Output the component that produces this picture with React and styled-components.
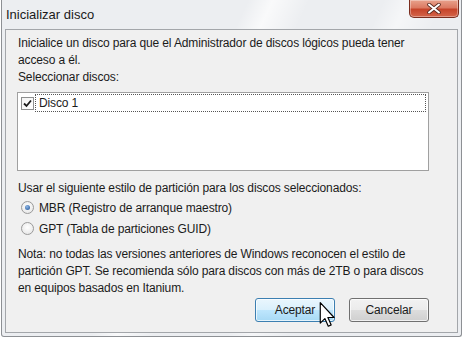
import React from 'react'
import styled, { createGlobalStyle } from 'styled-components'

const GlobalStyle = createGlobalStyle`
  html, body {
    margin: 0;
    padding: 0;
    background: #ffffff;
    overflow: hidden;
  }
  body {
    font-family: "Liberation Sans", Arial, sans-serif;
    font-size: 12px;
    letter-spacing: -0.13px;
    color: #1b1b1b;
  }
`

const Window = styled.div`
  box-sizing: border-box;
  width: 461px;
  height: 337px;
  margin-left: 1px;
  padding: 0 3px 3px 3px;
  display: flex;
  flex-direction: column;
  border: 1px solid #8d9094;
  border-top: none;
  border-radius: 0 0 3px 3px;
  background:
    linear-gradient(115deg, transparent 0 40%, rgba(255,255,255,0.7) 44%, transparent 50%),
    linear-gradient(115deg, transparent 0 62%, rgba(255,255,255,0.5) 66%, transparent 72%),
    #eceef1;
`

const TitleBar = styled.div`
  height: 29px;
  flex-shrink: 0;
  display: flex;
  align-items: flex-start;
  justify-content: space-between;
`

const Title = styled.span`
  font-size: 13px;
  line-height: 13px;
  letter-spacing: 0;
  margin-top: 8px;
  margin-left: 1px;
  color: #1a1a1a;
`

const CloseButton = styled.div`
  width: 50px;
  height: 18px;
  margin-right: -1px;
  box-sizing: border-box;
  border: 1px solid #7a2d1e;
  border-top: none;
  border-radius: 0 0 5px 5px;
  background: linear-gradient(#e8a28c 0%, #dc7a62 45%, #c6442a 55%, #d4654a 100%);
  box-shadow: inset 0 0 0 1px rgba(255,255,255,0.35);
  display: flex;
  align-items: center;
  justify-content: center;
`

const Client = styled.div`
  flex: 1;
  box-sizing: border-box;
  border: 1px solid #a3a6aa;
  background: #f0f0f0;
  padding: 5px 28px 0 12px;
  display: flex;
  flex-direction: column;
`

const Text = styled.div`
  flex-shrink: 0;
  line-height: 17px;
  white-space: nowrap;
  margin-top: ${p => p.$mt || 0}px;
`

const ListBox = styled.div`
  flex-shrink: 0;
  box-sizing: border-box;
  height: 79px;
  margin-top: 6px;
  margin-left: -1px;
  border: 1px solid #a0a0a0;
  background: #ffffff;
  padding: 1px 2px 0 3px;
`

const ListRow = styled.div`
  display: flex;
  align-items: center;
  height: 18px;
`

const CheckBox = styled.div`
  width: 13px;
  height: 13px;
  box-sizing: border-box;
  border: 1px solid #8e8f8f;
  background: linear-gradient(135deg, #f4f4f4, #ffffff);
  display: flex;
  align-items: center;
  justify-content: center;
  flex-shrink: 0;
`

const RowLabel = styled.div`
  flex: 1;
  height: 18px;
  margin-left: 1px;
  box-sizing: border-box;
  border: 1px dotted #555;
  padding-left: 3px;
  line-height: 16px;
`

const RadioRow = styled.div`
  flex-shrink: 0;
  display: flex;
  align-items: center;
  height: 21px;
  padding-left: 3px;
`

const Radio = styled.div`
  width: 13px;
  height: 13px;
  box-sizing: border-box;
  border-radius: 50%;
  border: 1px solid #9a9a9a;
  background: radial-gradient(circle at 50% 40%, #ffffff, #e2e2e2);
  display: flex;
  align-items: center;
  justify-content: center;
  margin-right: 5px;
`

const RadioDot = styled.div`
  width: 5px;
  height: 5px;
  border-radius: 50%;
  background: radial-gradient(circle at 40% 35%, #8fb8e8, #1b4f91);
`

const ButtonRow = styled.div`
  flex-shrink: 0;
  display: flex;
  justify-content: flex-end;
  gap: 14px;
  margin-top: 1px;
`

const Button = styled.div`
  position: relative;
  width: 80px;
  height: 24px;
  box-sizing: border-box;
  border-radius: 3px;
  border: 1px solid ${p => (p.$primary ? '#3c7fb1' : '#707070')};
  background: ${p =>
    p.$primary
      ? 'linear-gradient(#eaf6fd 0%, #d9f0fc 50%, #bee6fd 51%, #a7d9f5 100%)'
      : 'linear-gradient(#f2f2f2 0%, #ebebeb 50%, #dddddd 51%, #cfcfcf 100%)'};
  box-shadow: inset 0 0 0 1px rgba(255,255,255,0.7);
  display: flex;
  align-items: center;
  justify-content: center;
  color: #1b1b1b;
`

const Cursor = styled.svg`
  position: absolute;
  left: 63px;
  top: 3px;
`

export default function App() {
  return (
    <>
      <GlobalStyle />
      <Window>
        <TitleBar>
          <Title>Inicializar disco</Title>
          <CloseButton>
            <svg width="14" height="11" viewBox="0 0 14 11">
              <path d="M2 1.5 L12 9.5 M12 1.5 L2 9.5" stroke="#5a2a20" strokeWidth="3.6" strokeLinecap="round" />
              <path d="M2 1.5 L12 9.5 M12 1.5 L2 9.5" stroke="#ffffff" strokeWidth="2" strokeLinecap="round" />
            </svg>
          </CloseButton>
        </TitleBar>
        <Client>
          <Text>
            Inicialice un disco para que el Administrador de discos lógicos pueda tener
            <br />
            acceso a él.
          </Text>
          <Text>Seleccionar discos:</Text>
          <ListBox>
            <ListRow>
              <CheckBox>
                <svg width="9" height="9" viewBox="0 0 9 9">
                  <path d="M1 4.5 L3.5 7 L8 1.5" stroke="#1a1a1a" strokeWidth="1.8" fill="none" />
                </svg>
              </CheckBox>
              <RowLabel>Disco 1</RowLabel>
            </ListRow>
          </ListBox>
          <Text $mt={9}>Usar el siguiente estilo de partición para los discos seleccionados:</Text>
          <RadioRow>
            <Radio>
              <RadioDot />
            </Radio>
            MBR (Registro de arranque maestro)
          </RadioRow>
          <RadioRow>
            <Radio />
            GPT (Tabla de particiones GUID)
          </RadioRow>
          <Text $mt={7}>
            Nota: no todas las versiones anteriores de Windows reconocen el estilo de
            <br />
            partición GPT. Se recomienda sólo para discos con más de 2TB o para discos
            <br />
            en equipos basados en Itanium.
          </Text>
          <ButtonRow>
            <Button $primary>
              Aceptar
              <Cursor width="17" height="25" viewBox="0 0 12 19">
                <path
                  d="M0.5 0.5 L0.5 16 L4 12.6 L6.6 18.4 L8.8 17.4 L6.3 11.8 L11 11.8 Z"
                  fill="#ffffff"
                  stroke="#000000"
                  strokeWidth="0.9"
                  strokeLinejoin="round"
                />
              </Cursor>
            </Button>
            <Button>Cancelar</Button>
          </ButtonRow>
        </Client>
      </Window>
    </>
  )
}
